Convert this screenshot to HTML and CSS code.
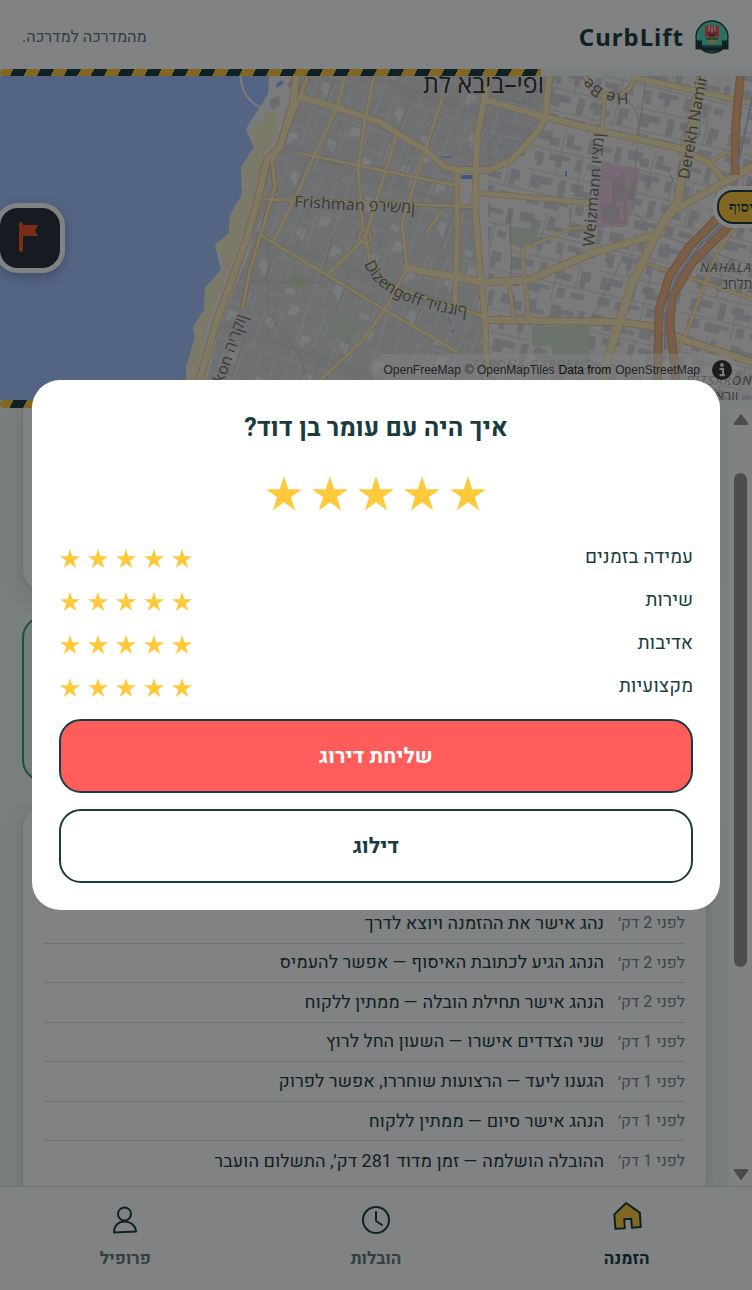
FILE: index.html
```html
<!DOCTYPE html>
<html lang="he" dir="rtl">
<head>
<meta charset="utf-8">
<meta name="viewport" content="width=device-width, initial-scale=1">
<title>CurbLift</title>
<link rel="stylesheet" href="styles.css">
</head>
<body>
<svg width="0" height="0" class="defs" aria-hidden="true">
  <symbol id="star" viewBox="0 0 36 36"><path d="M18 0l4.3 13.2H36L24.9 21.2 29.2 34.400 18 26.300 6.800 34.400 11.100 21.200 0 13.200h13.700z"/></symbol>
</svg>
<div class="app">
  <header class="topbar">
    <div class="brand">
      <svg class="brand-logo" viewBox="0 0 36 36" aria-hidden="true">
        <circle cx="18" cy="18" r="16" fill="#5ad8bc" stroke="#1a3c40" stroke-width="1.300"/>
        <path d="M1.500 21.500h6.500v5h20v-5h6.500v9H28l-3 2H11l-3-2H1.500z" fill="#1a3c40"/>
        <path d="M8 26.500h20v2H8z" fill="#2c6a66"/>
        <rect x="11" y="6.500" width="14" height="12" rx="3" fill="#f0525a"/>
        <path d="M15 7v6M18 7v6M21 7v6" stroke="#ffe3dd" stroke-width="1.300"/>
        <path d="M14 13h1.500M20.500 13H22M15 15q3 3 6 0" fill="none" stroke="#1a3c40" stroke-width="1.200"/>
        <path d="M12 20h12" stroke="#3f8f84" stroke-width="2"/>
        <path d="M14 24.500l4-3 4 3" fill="none" stroke="#ffc93c" stroke-width="2"/>
      </svg>
      <span class="brand-name">CurbLift</span>
    </div>
    <p class="tagline">מהמדרכה למדרכה.</p>
  </header>
  <div class="hazard"><div class="hazard-fill"></div></div>

  <section class="map" dir="ltr">
    <svg class="map-art" viewBox="0 76 752 324" preserveAspectRatio="xMidYMid slice" aria-hidden="true">
      <defs>
        <pattern id="blocks" width="78" height="94" patternUnits="userSpaceOnUse" patternTransform="rotate(19)">
          <rect width="78" height="94" fill="#dadbdd"/>
          <path d="M0 1H78M1 0V94M20 4V40M3 22H18M40 1V60M23 30H38M26 8V26M58 6V44M44 16H56M62 24H76M3 58H78M14 60V88M32 64V92M50 60V80M66 62V90M36 76H48M4 78H12" stroke="#ebecec" stroke-width="1.200"/>
          <path d="M5 30h9v6h-4v5h-5zM44 24h8v11h-4v-4h-4zM20 66h8v14h-4v-5h-4zM62 5h10v8h-5v3h-5zM53 84h9v6h-9z" fill="#f0f0f0"/>
          <path d="M0 46H78M30 46V94M49 0V46" stroke="#c3c8cb" stroke-width=".8"/>
        </pattern>
        <pattern id="houses" width="92" height="84" patternUnits="userSpaceOnUse" patternTransform="rotate(13)">
          <path d="M3 4h14v5h8v9h-9v-4H3zM32 3h7v9h9v5H32zM54 4h10v3h14v5H66v6H54zM82 4h6v16h-6zM4 26h9v14h-6v-5H4zM19 25h20v5h-7v8h-6v-6h-7zM46 26h6v12h-6zM57 27h14v14h-5v-8h-9zM77 28h9v7h-9zM5 50h22v7H16v6H5zM34 49h7v17h-7zM47 50h12v5h9v7H52v-4h-5zM76 49h10v10h-4v7h-6zM6 70h12v9H6zM24 71h24v4h-9v5H24zM56 70h8v10h-8zM70 72h14v6H70z" fill="#d4d5d8"/>
          <path d="M0 22H92M0 45H74M29 0V45M52 22V84M73 22V68M0 67H92" stroke="#c3c8c8" stroke-width=".8" fill="none"/>
        </pattern>
      </defs>
      <path d="M270 60L268 94 262 104 248 125 246 130 254 147 241 167 242 195 230 215 229 233 215 245 221 270 205 288 204 310 193 327 195 337 186 368V460H1200V60z" fill="#f4f1f0"/>
      <path d="M268 111L260 125 246 130 252 133 254 147 242 167 244 180 242 195 230 215 229 233 215 245 222 257 221 270 205 288 204 310 193 327 195 337 186 368V410H190L197 380 208 323 217 300 233 260 247 223 257 197 263 157 277 133V112z" fill="#f3efca"/>
      <path d="M285 140L300 90 292 60H560L545 120 510 162 478 172 476 207 485 320 488 410H200L220 325 250 250 262 170z" fill="url(#blocks)"/>
      <path d="M488 60H1200V410H488z" fill="url(#houses)"/>
      <path d="M241 70q-3 30 27 41" fill="none" stroke="#f4f1f0" stroke-width="2"/>
      <path d="M276 84l6-4 2 3-7 5z" fill="#8fb4ff"/>
      <path d="M269 101l10-6 1 10-8 5zM287 84l6-6 8 4v12l-12-6z" fill="#cfd2d4"/>
      <path d="M602 162l38 6-5 35-11 24-29 1z" fill="#eccfe0"/>
      <path d="M612 180h12v22h-12zM628 186h6v14h-6zM602 206h18v16h-18z" fill="#d2c8cf"/>
      <path d="M603 178h20v-6M600 205h14v-20h11v38h-18" fill="none" stroke="#dfc2d3" stroke-width="3"/>
      <path d="M297 272l16 8-8 9-22-5z" fill="#d2dcc0"/>
      <path d="M345 312l18 11-10 19-25-16zM509 228h28v17h-28zM552 326h38v50h-38zM532 326h20v20h-20z" fill="#d5dfd0"/>
      <path d="M459 173h14v32h-14z" fill="#f4f1f0"/>
      <path d="M461 175h12v4h-12zM565 171h2v5h-2z" fill="#7faaf5"/>
      <path d="M441 157h12M448 318l3 4M451 332l3-2" stroke="#7faaf5" stroke-width="1"/>
      <g fill="none" stroke="#c3c8c8" stroke-width="1">
        <path d="M247 282h85M322 277l10-40M268 240v75M270 315l30 40 8 30M646 76l-10 80-3 55 22 20M510 207l2 75M570 207v20M620 263l-30 60M660 235l90 30M700 76v60M655 165q22 2 20 40M560 80l-25 45M612 90q40 20 20 56"/>
      </g>
      <g class="road-edge">
        <path d="M297 70L293 103 280 147 267 160 257 203 247 237 233 277 217 320 197 390" stroke-width="8"/>
        <path d="M310 70L300 97 280 147 272 160 275 187 263 227 250 270 242 310" stroke-width="5"/>
        <path d="M300 97L338 108 380 122 397 133 425 150 445 167 459 170H489L512 160 539 130 545 117 550 70" stroke-width="7"/>
        <path d="M485 100L545 117 605 132 679 148 709 163 724 180" stroke-width="7"/>
        <path d="M491 70L484 100 477 137 475 203 480 270 485 317 487 400" stroke-width="7"/>
        <path d="M457 170V237L455 307M479 193L590 203M632 77L752 103" stroke-width="6"/>
        <path d="M407 268L482 282 529 280 592 253 655 235 669 213 705 193 800 140" stroke-width="8"/>
        <path d="M704 60L692 127 677 203 655 237 632 283 619 323 598 390" stroke-width="9"/>
        <path d="M487 320L622 322 655 327 685 340 800 378" stroke-width="8"/>
        <path d="M258 199L380 203 475 207M347 70L337 107 317 150 300 187 273 243M375 70L365 120 358 167 363 230M397 133L372 215 365 237 370 260 385 285 455 307 485 317M443 97L425 150 402 223 407 268 385 310 360 343 315 385M298 153L380 170 454 185M260 235L327 275 380 307 459 353M327 275L363 240M509 283L514 320M529 320L522 250 572 228H589M605 90L602 130M591 227L592 253M645 263L705 283 800 315M735 227L719 250 705 283 685 337 672 360M709 163L726 152 740 160M443 210L426 233" stroke-width="4"/>
        <circle cx="365" cy="237" r="6" stroke-width="4"/><circle cx="610" cy="72" r="25" stroke-width="5"/>
      </g>
      <g class="road">
        <path d="M297 70L293 103 280 147 267 160 257 203 247 237 233 277 217 320 197 390" stroke-width="6.500"/>
        <path d="M310 70L300 97 280 147 272 160 275 187 263 227 250 270 242 310" stroke-width="3.500"/>
        <path d="M300 97L338 108 380 122 397 133 425 150 445 167 459 170H489L512 160 539 130 545 117 550 70" stroke-width="6"/>
        <path d="M485 100L545 117 605 132 679 148 709 163 724 180" stroke-width="6"/>
        <path d="M491 70L484 100 477 137 475 203 480 270 485 317 487 400" stroke-width="6"/>
        <path d="M457 170V237L455 307M479 193L590 203M632 77L752 103" stroke-width="5"/>
        <path d="M407 268L482 282 529 280 592 253 655 235 669 213 705 193 800 140" stroke-width="7"/>
        <path d="M704 60L692 127 677 203 655 237 632 283 619 323 598 390" stroke-width="8"/>
        <path d="M487 320L622 322 655 327 685 340 800 378" stroke-width="6.500"/>
        <path d="M258 199L380 203 475 207M347 70L337 107 317 150 300 187 273 243M375 70L365 120 358 167 363 230M397 133L372 215 365 237 370 260 385 285 455 307 485 317M443 97L425 150 402 223 407 268 385 310 360 343 315 385M298 153L380 170 454 185M260 235L327 275 380 307 459 353M327 275L363 240M509 283L514 320M529 320L522 250 572 228H589M605 90L602 130M591 227L592 253M645 263L705 283 800 315M735 227L719 250 705 283 685 337 672 360M709 163L726 152 740 160M443 210L426 233" stroke-width="3.200"/>
        <circle cx="365" cy="237" r="6" stroke-width="2.500"/><circle cx="610" cy="72" r="25" stroke-width="3.500"/>
      </g>
      <g fill="none">
        <path d="M742 60L736 120 735 175M760 180L719 217 689 247 669 277 659 310 657 400M760 205L732 223 692 263 672 297 670 323 678 400" stroke="#e0a673" stroke-width="9"/>
        <path d="M742 60L736 120 735 175M760 180L719 217 689 247 669 277 659 310 657 400M760 205L732 223 692 263 672 297 670 323 678 400" stroke="#eeb987" stroke-width="6"/>
        <path d="M756 80L738 165M740 208L700 245 675 280 665 315V350" stroke="#b6c4ea" stroke-width="2"/>
      </g>
      <g class="map-label">
        <text x="423" y="93" class="city">תל אביב–יפו</text>
        <text transform="translate(294 207) rotate(3)" class="street">Frishman פרישמן</text>
        <text transform="translate(594 247) rotate(-85)" class="street">Weizmann ויצמן</text>
        <text transform="translate(689 180) rotate(-80)" class="street">Derekh Namir</text>
        <path id="dizengoff" d="M364 264Q380 305 470 317" fill="none"/>
        <text class="street"><textPath href="#dizengoff">Dizengoff דיזנגוף</textPath></text>
        <text transform="translate(223 384) rotate(-70)" class="street">kon הירקון</text>
        <path id="medina" d="M628 92Q606 98 584 72" fill="none"/>
        <text class="street"><textPath href="#medina">He Be</textPath></text>
        <text x="700" y="272" class="area">NAHALAT</text>
        <text x="722" y="289" class="area-he">נחלת</text>
        <text x="472" y="369" class="area faint">SARONA GARDENS</text>
        <text x="686" y="385" class="area">BITSARON</text>
        <text x="716" y="401" class="area-he">ארוו</text>
      </g>
    </svg>
    <div class="pin-flag">
      <svg viewBox="0 0 24 34" aria-hidden="true"><path d="M3 3v26" stroke="#f0562c" stroke-width="4" stroke-linecap="round"/><path d="M3 4h17l-3 5.500 3 5.500H3z" fill="#f0562c"/></svg>
    </div>
    <div class="pin-pickup" dir="rtl">איסוף</div>
    <div class="credits">
      <p><a href="#fm">OpenFreeMap</a><a href="#omt">© OpenMapTiles</a><span>Data from</span><a href="#osm">OpenStreetMap</a></p>
      <button class="info" type="button" aria-label="Attribution"><svg viewBox="0 0 20 20" aria-hidden="true"><circle cx="10" cy="10" r="10" fill="#333"/><circle cx="10" cy="5" r="1.900" fill="#f0f0f0"/><path d="M7.500 9H11v6M7.500 15.200h5.500" stroke="#f0f0f0" stroke-width="2.200" fill="none"/></svg></button>
    </div>
  </section>
  <div class="hazard hazard-low"><div class="hazard-fill"></div></div>

  <div class="body">
    <div class="scrollbar" aria-hidden="true">
      <svg viewBox="0 0 16 12"><path d="M8 2l5.500 7.500h-11z"/></svg>
      <div class="scroll-track"><div class="scroll-thumb"></div></div>
      <svg viewBox="0 0 16 12"><path d="M8 10L2.500 2.500h11z"/></svg>
    </div>
    <main class="content">
      <section class="card card-top"></section>
      <section class="card card-done"></section>
      <section class="card card-log">
        <ul class="log">
          <li><time>לפני 2 דק׳</time><span>נהג אישר את ההזמנה ויוצא לדרך</span></li>
          <li><time>לפני 2 דק׳</time><span>הנהג הגיע לכתובת האיסוף — אפשר להעמיס</span></li>
          <li><time>לפני 2 דק׳</time><span>הנהג אישר תחילת הובלה — ממתין ללקוח</span></li>
          <li><time>לפני 1 דק׳</time><span>שני הצדדים אישרו — השעון החל לרוץ</span></li>
          <li><time>לפני 1 דק׳</time><span>הגענו ליעד — הרצועות שוחררו, אפשר לפרוק</span></li>
          <li><time>לפני 1 דק׳</time><span>הנהג אישר סיום — ממתין ללקוח</span></li>
          <li><time>לפני 1 דק׳</time><span>ההובלה הושלמה — זמן מדוד 281 דק׳, התשלום הועבר</span></li>
        </ul>
      </section>
    </main>
  </div>

  <nav class="tabs">
    <a class="tab tab-active" href="#order">
      <svg viewBox="0 0 32 32" aria-hidden="true"><path d="M3.500 13.500L16 3l13 10.500V28h-9v-9h-7v9H3.500z" fill="#ffc93c"/></svg>
      <span>הזמנה</span>
    </a>
    <a class="tab" href="#moves">
      <svg viewBox="0 0 32 32" aria-hidden="true"><circle cx="16" cy="16" r="13"/><path d="M16 8v9l6 4"/></svg>
      <span>הובלות</span>
    </a>
    <a class="tab" href="#profile">
      <svg viewBox="0 0 32 32" aria-hidden="true"><circle cx="15.500" cy="10" r="6.500"/><path d="M5 28.500C5 21 10 17.500 15.500 17.500S26.500 21 27 27.500z"/></svg>
      <span>פרופיל</span>
    </a>
  </nav>
</div>

<div class="backdrop">
  <div class="dialog" role="dialog" aria-modal="true" aria-labelledby="rate-title">
    <h2 id="rate-title">איך היה עם עומר בן דוד?</h2>
    <div class="stars stars-big">
      <button type="button" aria-label="1"><svg><use href="#star"/></svg></button><button type="button" aria-label="2"><svg><use href="#star"/></svg></button><button type="button" aria-label="3"><svg><use href="#star"/></svg></button><button type="button" aria-label="4"><svg><use href="#star"/></svg></button><button type="button" aria-label="5"><svg><use href="#star"/></svg></button>
    </div>
    <div class="criteria">
      <div class="criterion"><span>עמידה בזמנים</span><div class="stars"><button type="button" aria-label="1"><svg><use href="#star"/></svg></button><button type="button" aria-label="2"><svg><use href="#star"/></svg></button><button type="button" aria-label="3"><svg><use href="#star"/></svg></button><button type="button" aria-label="4"><svg><use href="#star"/></svg></button><button type="button" aria-label="5"><svg><use href="#star"/></svg></button></div></div>
      <div class="criterion"><span>שירות</span><div class="stars"><button type="button" aria-label="1"><svg><use href="#star"/></svg></button><button type="button" aria-label="2"><svg><use href="#star"/></svg></button><button type="button" aria-label="3"><svg><use href="#star"/></svg></button><button type="button" aria-label="4"><svg><use href="#star"/></svg></button><button type="button" aria-label="5"><svg><use href="#star"/></svg></button></div></div>
      <div class="criterion"><span>אדיבות</span><div class="stars"><button type="button" aria-label="1"><svg><use href="#star"/></svg></button><button type="button" aria-label="2"><svg><use href="#star"/></svg></button><button type="button" aria-label="3"><svg><use href="#star"/></svg></button><button type="button" aria-label="4"><svg><use href="#star"/></svg></button><button type="button" aria-label="5"><svg><use href="#star"/></svg></button></div></div>
      <div class="criterion"><span>מקצועיות</span><div class="stars"><button type="button" aria-label="1"><svg><use href="#star"/></svg></button><button type="button" aria-label="2"><svg><use href="#star"/></svg></button><button type="button" aria-label="3"><svg><use href="#star"/></svg></button><button type="button" aria-label="4"><svg><use href="#star"/></svg></button><button type="button" aria-label="5"><svg><use href="#star"/></svg></button></div></div>
    </div>
    <div class="actions">
      <button class="btn btn-primary" type="button">שליחת דירוג</button>
      <button class="btn" type="button">דילוג</button>
    </div>
  </div>
</div>
</body>
</html>
```
FILE: styles.css
```css
:root {
  --ink: #1a3c40;
  --muted: #5f7a7e;
  --line: #cfe0de;
  --bg: #eff6f5;
  --yellow: #ffc93c;
  --coral: #ff5c5c;
}
* { box-sizing: border-box; }
body {
  margin: 0;
  color: var(--ink);
  background: var(--bg);
  font-family: Heebo, Roboto, "Open Sans", "Liberation Sans", sans-serif;
  font-size: 17px;
  line-height: 1.5;
}
p, h2, ul { margin: 0; padding: 0; }
button { font: inherit; color: inherit; border: 0; padding: 0; background: none; cursor: pointer; }
a { color: inherit; text-decoration: none; }
.defs { position: absolute; }
.app { display: flex; flex-direction: column; height: 100vh; }

.topbar {
  display: flex;
  align-items: center;
  justify-content: space-between;
  padding: 17px 22px 12px;
  background: #fff;
}
.brand { display: flex; align-items: center; gap: 10px; height: 40px; }
.brand-logo { width: 36px; height: 36px; }
.brand-name { font: 700 24px/40px "Noto Sans", sans-serif; letter-spacing: 1px; }
.tagline { font-size: 16px; color: var(--muted); }

.hazard { flex: none; height: 7px; background: var(--bg); direction: ltr; }
.hazard-low { height: 8px; }
.hazard-fill {
  width: 72%;
  height: 100%;
  border-radius: 4px 0 0 4px;
  background: repeating-linear-gradient(117deg, var(--yellow) 0 12px, var(--ink) 12px 24px);
}

.map { flex: none; position: relative; height: 324px; overflow: hidden; background: #a4c4ff; }
.map-art { display: block; width: 100%; height: 100%; }
.road-edge, .road { fill: none; stroke-linejoin: round; }
.road-edge { stroke: #e3b58a; }
.road { stroke: #f8edb8; }
.map-label { fill: #70706e; font-family: "Noto Sans", "Open Sans", sans-serif; }
.map-label text { direction: ltr; unicode-bidi: bidi-override; paint-order: stroke; stroke: #f4f1f066; stroke-width: 1px; }
.map-label .city { font-size: 25px; fill: #333; }
.street { font-size: 16px; }
.area { font-size: 13px; font-style: italic; letter-spacing: 1px; }
.area-he { font-size: 14px; }
.faint { opacity: .5; }
.pin-flag {
  position: absolute;
  left: -5px;
  top: 127px;
  display: grid;
  place-items: center;
  width: 70px;
  height: 70px;
  border: 5px solid #fff;
  border-radius: 23px;
  background: #2a303a;
  box-shadow: 0 4px 12px #00000040;
}
.pin-flag svg { width: 24px; height: 34px; }
.pin-pickup {
  position: absolute;
  left: 717px;
  top: 114px;
  padding: 0 10px;
  border: 2px solid var(--ink);
  border-radius: 16px;
  background: var(--yellow);
  box-shadow: 0 0 0 4px #fff;
  font: 700 15px/30px "Liberation Serif", serif;
  white-space: nowrap;
}
.credits {
  position: absolute;
  right: 15px;
  bottom: 14px;
  display: flex;
  align-items: center;
  gap: 12px;
  padding: 6px 5px 6px 12px;
  border-radius: 16px;
  background: #ffffff80;
  color: #111;
  font: 12px/20px "Liberation Sans", sans-serif;
}
.credits p { display: flex; gap: 4px; }
.credits a { color: #444; }
.info { display: flex; }
.info svg { width: 20px; height: 20px; }

.body { display: flex; flex: 1; min-height: 0; }
.scrollbar { display: flex; flex-direction: column; align-items: center; width: 23px; padding: 5px 0 5px; background: #fdfdfd; }
.scrollbar svg { width: 18px; height: 14px; fill: #8f9092; stroke: #8f9092; stroke-width: 2; stroke-linejoin: round; }
.scroll-track { display: flex; flex: 1; width: 13px; padding: 46px 0 200px; }
.scroll-thumb { width: 100%; border-radius: 7px; background: #939496; }
.content { display: flex; flex: 1; flex-direction: column; gap: 24px; padding: 0 22px; overflow: hidden; }
.card { flex: none; border: 1px solid var(--line); border-radius: 22px; background: #fff; box-shadow: 0 6px 20px #1a3c401f; }
.card-top { height: 184px; border-top: 0; border-radius: 0 0 22px 22px; }
.card-done { height: 166px; border: 2px solid #2f9e74; background: #e3f4ea; box-shadow: none; }
.card-log { padding: 97px 21px 20px; }
.log { display: grid; grid-auto-rows: 1fr; height: 277px; list-style: none; font-size: 18px; }
.log li { display: flex; align-items: center; gap: 14px; border-bottom: 1px solid var(--line); }
.log li:last-child { border-bottom: 0; }
.log time { flex: none; width: 67px; font-size: 16px; color: #71888b; white-space: nowrap; }

.tabs { display: grid; grid-template-columns: repeat(3, 1fr); flex: none; height: 104px; border-top: 1px solid var(--line); background: #fff; }
.tab { display: flex; flex-direction: column; align-items: center; gap: 10px; padding-top: 17px; color: var(--muted); font-weight: 700; }
.tab svg { width: 32px; height: 32px; fill: none; stroke: var(--ink); stroke-width: 2; stroke-linejoin: round; stroke-linecap: round; }
.tab-active { color: var(--ink); }
.tab-active svg { transform: translateY(-4px) rotate(-4deg); }

.backdrop { position: fixed; inset: 0; display: grid; align-items: center; padding: 32px; background: #04060880; }
.dialog { padding: 27px; border-radius: 28px; background: #fff; }
.dialog h2 { padding-top: 3px; font-size: 25px; line-height: 38px; text-align: center; }
.stars { display: flex; gap: 8px; }
.stars button { display: flex; }
.stars svg { width: 20px; height: 20px; fill: var(--yellow); }
.stars-big { justify-content: center; gap: 10px; padding: 28px 0 24px; }
.stars-big svg { width: 36px; height: 36px; }
.criterion { display: flex; align-items: center; justify-content: space-between; height: 43px; font-size: 19px; }
.criterion .stars { padding: 3px 1px 0; }
.actions { display: grid; gap: 16px; padding-top: 11px; }
.btn { height: 74px; padding-top: 2px; border: 2px solid var(--ink); border-radius: 22px; background: #fff; font-size: 21px; font-weight: 700; }
.btn-primary { background: var(--coral); color: #fff; }
```
